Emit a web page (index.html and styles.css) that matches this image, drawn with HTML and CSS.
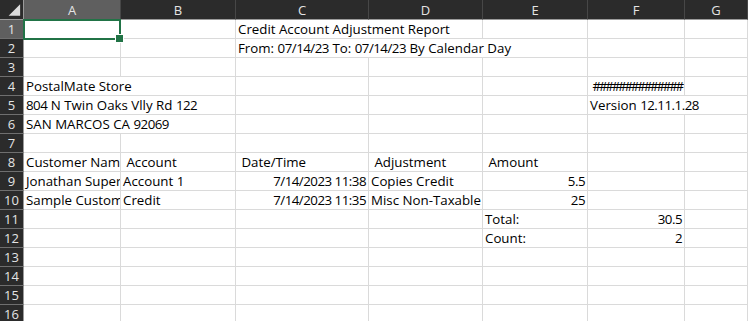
FILE: index.html
```html
<!doctype html>
<html lang="en">
  <head>
    <meta charset="utf-8"/>
    <title>Credit Account Adjustment Report</title>
    <link rel="stylesheet" href="styles.css">
  </head>
  <body>
    <div class="sheet">
      <div class="corner">
        <svg width="24" height="20" viewBox="0 0 24 20"><polygon points="9,16 21,16 21,4" fill="#dcdcdc"/></svg>
      </div>
      <div class="col-head active">A</div>
      <div class="col-head">B</div>
      <div class="col-head">C</div>
      <div class="col-head">D</div>
      <div class="col-head">E</div>
      <div class="col-head">F</div>
      <div class="col-head">G</div>

      <div class="row-head active">1</div>
      <div class="cell"></div>
      <div class="cell"></div>
      <div class="cell span2">Credit Account Adjustment Report</div>
      <div class="cell"></div>
      <div class="cell"></div>
      <div class="cell"></div>

      <div class="row-head">2</div>
      <div class="cell"></div>
      <div class="cell"></div>
      <div class="cell span3">From: <span class="fig">07/14/23</span> To: <span class="fig">07/14/23</span> By Calendar Day</div>
      <div class="cell"></div>
      <div class="cell"></div>

      <div class="row-head">3</div>
      <div class="cell"></div>
      <div class="cell"></div>
      <div class="cell"></div>
      <div class="cell"></div>
      <div class="cell"></div>
      <div class="cell"></div>
      <div class="cell"></div>

      <div class="row-head">4</div>
      <div class="cell span2">PostalMate Store</div>
      <div class="cell"></div>
      <div class="cell"></div>
      <div class="cell"></div>
      <div class="cell num hashes">##############</div>
      <div class="cell"></div>

      <div class="row-head">5</div>
      <div class="cell span2"><span class="fig">804</span> N Twin Oaks Vlly Rd <span class="fig">122</span></div>
      <div class="cell"></div>
      <div class="cell"></div>
      <div class="cell"></div>
      <div class="cell span2">Version <span class="fig">12.11.1.28</span></div>

      <div class="row-head">6</div>
      <div class="cell span2">SAN MARCOS CA <span class="fig">92069</span></div>
      <div class="cell"></div>
      <div class="cell"></div>
      <div class="cell"></div>
      <div class="cell"></div>
      <div class="cell"></div>

      <div class="row-head">7</div>
      <div class="cell"></div>
      <div class="cell"></div>
      <div class="cell"></div>
      <div class="cell"></div>
      <div class="cell"></div>
      <div class="cell"></div>
      <div class="cell"></div>

      <div class="row-head">8</div>
      <div class="cell">Customer Name</div>
      <div class="cell"> Account</div>
      <div class="cell"> Date/Time</div>
      <div class="cell"> Adjustment</div>
      <div class="cell"> Amount</div>
      <div class="cell"></div>
      <div class="cell"></div>

      <div class="row-head">9</div>
      <div class="cell">Jonathan Superman</div>
      <div class="cell">Account <span class="fig">1</span></div>
      <div class="cell num fig">7/14/2023 11:38</div>
      <div class="cell">Copies Credit</div>
      <div class="cell num fig">5.5</div>
      <div class="cell"></div>
      <div class="cell"></div>

      <div class="row-head">10</div>
      <div class="cell">Sample Customer</div>
      <div class="cell">Credit</div>
      <div class="cell num fig">7/14/2023 11:35</div>
      <div class="cell">Misc Non-Taxable</div>
      <div class="cell num fig">25</div>
      <div class="cell"></div>
      <div class="cell"></div>

      <div class="row-head">11</div>
      <div class="cell"></div>
      <div class="cell"></div>
      <div class="cell"></div>
      <div class="cell"></div>
      <div class="cell">Total:</div>
      <div class="cell num fig">30.5</div>
      <div class="cell"></div>

      <div class="row-head">12</div>
      <div class="cell"></div>
      <div class="cell"></div>
      <div class="cell"></div>
      <div class="cell"></div>
      <div class="cell">Count:</div>
      <div class="cell num fig">2</div>
      <div class="cell"></div>

      <div class="row-head">13</div>
      <div class="cell"></div>
      <div class="cell"></div>
      <div class="cell"></div>
      <div class="cell"></div>
      <div class="cell"></div>
      <div class="cell"></div>
      <div class="cell"></div>

      <div class="row-head">14</div>
      <div class="cell"></div>
      <div class="cell"></div>
      <div class="cell"></div>
      <div class="cell"></div>
      <div class="cell"></div>
      <div class="cell"></div>
      <div class="cell"></div>

      <div class="row-head">15</div>
      <div class="cell"></div>
      <div class="cell"></div>
      <div class="cell"></div>
      <div class="cell"></div>
      <div class="cell"></div>
      <div class="cell"></div>
      <div class="cell"></div>

      <div class="row-head">16</div>
      <div class="cell"></div>
      <div class="cell"></div>
      <div class="cell"></div>
      <div class="cell"></div>
      <div class="cell"></div>
      <div class="cell"></div>
      <div class="cell"></div>

      <div class="selection"></div>
    </div>
  </body>
</html>
```

FILE: styles.css
```css
* {
  box-sizing: border-box;
}
body {
  margin: 0;
  background: #ffffff;
  overflow: hidden;
}
.sheet {
  position: relative;
  display: grid;
  grid-template-columns: 24px 97px 115px 133px 114px 105px 97px 1fr;
  grid-template-rows: 20px;
  grid-auto-rows: 19px;
  font-family: "Open Sans", "Liberation Sans", sans-serif;
  font-size: 13.3px;
  color: #000000;
}
.corner, .col-head, .row-head {
  display: flex;
  align-items: center;
  justify-content: center;
  background: #2b2b2b;
  color: #e4e4e4;
  font-family: "Open Sans", sans-serif;
  font-size: 13px;
}
.corner {
  border-right: 1px solid #9b9b9b;
  border-bottom: 1px solid #9b9b9b;
}
.col-head {
  border-right: 1px solid #474747;
  border-bottom: 1px solid #9b9b9b;
}
.row-head {
  border-right: 1px solid #9b9b9b;
  border-bottom: 1px solid #6f6f6f;
}
.active {
  background: #5f5f5f;
}
.cell {
  padding: 0 2px;
  border-right: 1px solid #dadada;
  border-bottom: 1px solid #dadada;
  line-height: 18px;
  white-space: pre;
  overflow: hidden;
}
.num {
  text-align: right;
}
.fig {
  letter-spacing: -0.5px;
}
.hashes {
  letter-spacing: -2.2px;
}
.span2 {
  grid-column: span 2;
}
.span3 {
  grid-column: span 3;
}
.selection {
  position: absolute;
  left: 23px;
  top: 19px;
  width: 98px;
  height: 21px;
  border: 2px solid #217346;
}
.selection::after {
  content: '';
  position: absolute;
  right: -5px;
  bottom: -5px;
  width: 7px;
  height: 7px;
  background: #217346;
  border: 1px solid #ffffff;
}
```
